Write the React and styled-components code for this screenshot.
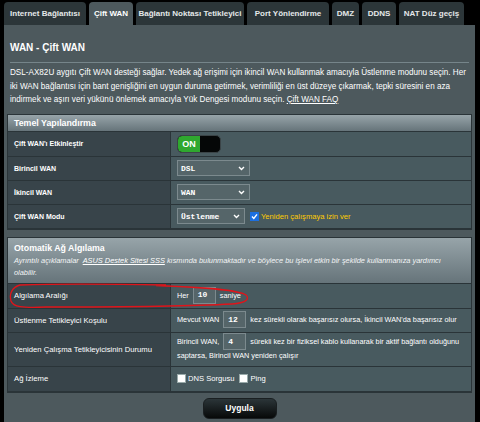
import React from 'react';
import styled, { createGlobalStyle } from 'styled-components';

const GlobalStyle = createGlobalStyle`
  html, body { margin: 0; padding: 0; background: #000; }
  *, *::before, *::after { box-sizing: border-box; }
  body { font-family: "Liberation Sans", Arial, sans-serif; color: #fff; }
`;

const Page = styled.div`
  width: 480px;
  height: 422px;
  overflow: hidden;
  padding-left: 4px;
`;

const TabBar = styled.div`
  display: flex;
  gap: 3px;
  height: 25px;
  padding-top: 2px;
`;

const Tab = styled.div`
  width: ${p => p.$w}px;
  display: flex;
  align-items: center;
  justify-content: center;
  font-size: 8px;
  font-weight: bold;
  white-space: nowrap;
  color: ${p => (p.$active ? '#fff' : '#e4e8e9')};
  background: ${p => (p.$active ? '#4d595d' : '#2c3639')};
  border-radius: 4px 4px 0 0;
`;

const Panel = styled.div`
  width: 471px;
  height: 397px;
  background: #4d595d;
  padding: 16px 3px 0;
`;

const Title = styled.h1`
  margin: 0 3px;
  font-size: 10px;
  line-height: 14px;
  font-weight: bold;
`;

const Divider = styled.div`
  margin: 7px 3px 0;
  height: 1px;
  background: #76858a;
`;

const Desc = styled.p`
  margin: 3px 3px 0;
  font-size: 8.15px;
  line-height: 13.5px;
  white-space: nowrap;
`;

const Link = styled.a`
  color: #fff;
  text-decoration: underline;
`;

const Table = styled.div`
  position: relative;
  margin-top: ${p => p.$mt}px;
  border: 1px solid #2a3438;
  display: grid;
  grid-template-columns: 163px 1fr;
`;

const Head = styled.div`
  grid-column: 1 / -1;
  padding: ${p => p.$pad};
  background: linear-gradient(#97a4a9, #66747a);
  border-bottom: 1px solid #2a3438;
`;

const HeadTitle = styled.div`
  font-size: 8.8px;
  font-weight: bold;
  line-height: 14px;
`;

const HeadNote = styled.div`
  font-size: 7.4px;
  font-style: italic;
  line-height: 12px;
  color: #f2f4f5;
`;

const Label = styled.div`
  height: ${p => p.$h}px;
  display: flex;
  align-items: center;
  padding-left: 6px;
  font-size: ${p => (p.$bold ? '7px' : '7.7px')};
  font-weight: ${p => (p.$bold ? 'bold' : 'normal')};
  background: #38444a;
  border-bottom: 1px solid #2a3438;
  border-right: 1px solid #2a3438;
`;

const Value = styled.div`
  height: ${p => p.$h}px;
  display: flex;
  align-items: center;
  gap: 5px;
  padding: 0 6px;
  font-size: 7.3px;
  background: #485a5f;
  border-bottom: 1px solid #2a3438;
`;

const Flow = styled.div`
  line-height: 14px;
`;

const Switch = styled.div`
  display: flex;
  width: 44px;
  height: 18px;
  border-radius: 5px;
  background: #050707;
  border: 1px solid #3b4447;
  overflow: hidden;
`;

const SwitchOn = styled.div`
  width: 22px;
  background: #2fa82f;
  font-size: 9px;
  font-weight: bold;
  display: flex;
  align-items: center;
  justify-content: center;
  border-radius: 4px 0 0 4px;
`;

const Select = styled.div`
  width: ${p => p.$w}px;
  height: 16px;
  display: flex;
  align-items: center;
  justify-content: space-between;
  padding: 0 4px 0 3px;
  background: #556569;
  border: 1px solid #7c8a8e;
  font-family: "Liberation Mono", monospace;
  font-weight: bold;
  font-size: 8px;
`;

const Field = styled.span`
  display: inline-flex;
  vertical-align: middle;
  align-items: center;
  width: 23px;
  height: 17px;
  margin: -3px 4px -2px;
  padding-left: 4px;
  background: #556569;
  border: 1px solid #7c8a8e;
  font-family: "Liberation Mono", monospace;
  font-weight: bold;
  font-size: 8px;
`;

const Check = styled.label`
  display: inline-flex;
  align-items: center;
  gap: 2px;
  color: ${p => p.$color || '#fff'};
  font-size: 7.6px;
`;

const Box = styled.span`
  width: 9px;
  height: 9px;
  background: ${p => (p.$on ? '#1c6fe0' : '#fff')};
  border: 1px solid ${p => (p.$on ? '#1c6fe0' : '#9aa')};
  display: inline-flex;
  align-items: center;
  justify-content: center;
`;

const Footer = styled.div`
  display: flex;
  justify-content: center;
  padding-top: 5px;
`;

const Button = styled.button`
  width: 74px;
  height: 21px;
  border-radius: 6px;
  border: 1px solid #1a1f21;
  background: linear-gradient(#2b3538, #070909);
  color: #fff;
  font-family: "Liberation Sans", Arial, sans-serif;
  font-weight: bold;
  font-size: 8.5px;
`;

const Mark = styled.svg`
  position: absolute;
  left: -2px;
  top: 44px;
  pointer-events: none;
`;

const Chevron = () => (
  <svg width="7" height="5" viewBox="0 0 7 5">
    <path d="M1 1 L3.5 3.5 L6 1" fill="none" stroke="#fff" strokeWidth="1.4" />
  </svg>
);

const Tick = () => (
  <svg width="7" height="7" viewBox="0 0 7 7">
    <path d="M1 3.6 L2.8 5.4 L6 1.4" fill="none" stroke="#fff" strokeWidth="1.4" />
  </svg>
);

const tabs = [
  ['Internet Bağlantısı', 82],
  ['Çift WAN', 44, true],
  ['Bağlantı Noktası Tetikleyici', 108],
  ['Port Yönlendirme', 82],
  ['DMZ', 27],
  ['DDNS', 34],
  ['NAT Düz geçiş', 65],
];

export default function App() {
  return (
    <Page>
      <GlobalStyle />
      <TabBar>
        {tabs.map(([t, w, a]) => (
          <Tab key={t} $w={w} $active={a}>{t}</Tab>
        ))}
      </TabBar>
      <Panel>
        <Title>WAN - Çift WAN</Title>
        <Divider />
        <Desc>
          DSL-AX82U aygıtı Çift WAN desteği sağlar. Yedek ağ erişimi için ikincil WAN kullanmak amacıyla Üstlenme modunu seçin. Her<br />
          iki WAN bağlantısı için bant genişliğini en uygun duruma getirmek, verimliliği en üst düzeye çıkarmak, tepki süresini en aza<br />
          indirmek ve aşırı veri yükünü önlemek amacıyla Yük Dengesi modunu seçin. <Link>Çift WAN FAQ</Link>
        </Desc>

        <Table $mt={7}>
          <Head $pad="1px 6px 1px">
            <HeadTitle>Temel Yapılandırma</HeadTitle>
          </Head>
          <Label $h={25} $bold>Çift WAN'ı Etkinleştir</Label>
          <Value $h={25}>
            <Switch><SwitchOn>ON</SwitchOn></Switch>
          </Value>
          <Label $h={24} $bold>Birincil WAN</Label>
          <Value $h={24}><Select $w={73}>DSL<Chevron /></Select></Value>
          <Label $h={24} $bold>İkincil WAN</Label>
          <Value $h={24}><Select $w={73}>WAN<Chevron /></Select></Value>
          <Label $h={24} $bold>Çift WAN Modu</Label>
          <Value $h={24}>
            <Select $w={68}>Üstlenme<Chevron /></Select>
            <Check $color="#ffcc00"><Box $on><Tick /></Box>Yeniden çalışmaya izin ver</Check>
          </Value>
        </Table>

        <Table $mt={7}>
          <Head $pad="3px 6px 4px">
            <HeadTitle>Otomatik Ağ Algılama</HeadTitle>
            <HeadNote>
              Ayrıntılı açıklamalar&nbsp; <Link>ASUS Destek Sitesi SSS</Link> kısmında bulunmaktadır ve böylece bu işlevi etkin bir şekilde kullanmanıza yardımcı olabilir.
            </HeadNote>
          </Head>
          <Label $h={25}>Algılama Aralığı</Label>
          <Value $h={25}><Flow>Her<Field>10</Field>saniye</Flow></Value>
          <Label $h={24}>Üstlenme Tetikleyici Koşulu</Label>
          <Value $h={24}><Flow>Mevcut WAN<Field>12</Field>kez sürekli olarak başarısız olursa, İkincil WAN'da başarısız olur</Flow></Value>
          <Label $h={34}>Yeniden Çalışma Tetikleyicisinin Durumu</Label>
          <Value $h={34}><Flow>Birincil WAN,<Field>4</Field>sürekli kez bir fiziksel kablo kullanarak bir aktif bağlantı olduğunu saptarsa, Birincil WAN yeniden çalışır</Flow></Value>
          <Label $h={25}>Ağ İzleme</Label>
          <Value $h={25}>
            <Check><Box />DNS Sorgusu</Check>
            <Check><Box />Ping</Check>
          </Value>
          <Mark width="250" height="32" viewBox="0 0 250 32">
            <path
              d="M160 3 C110 2 40 2 14 3 C6 5 3 12 5 19 C7 25 16 26 40 25 C110 25 190 24 226 22 C240 21 244 17 240 13 C234 9 215 6 150 3.5"
              fill="none"
              stroke="#e0141a"
              strokeWidth="1.3"
            />
          </Mark>
        </Table>

        <Footer>
          <Button>Uygula</Button>
        </Footer>
      </Panel>
    </Page>
  );
}
